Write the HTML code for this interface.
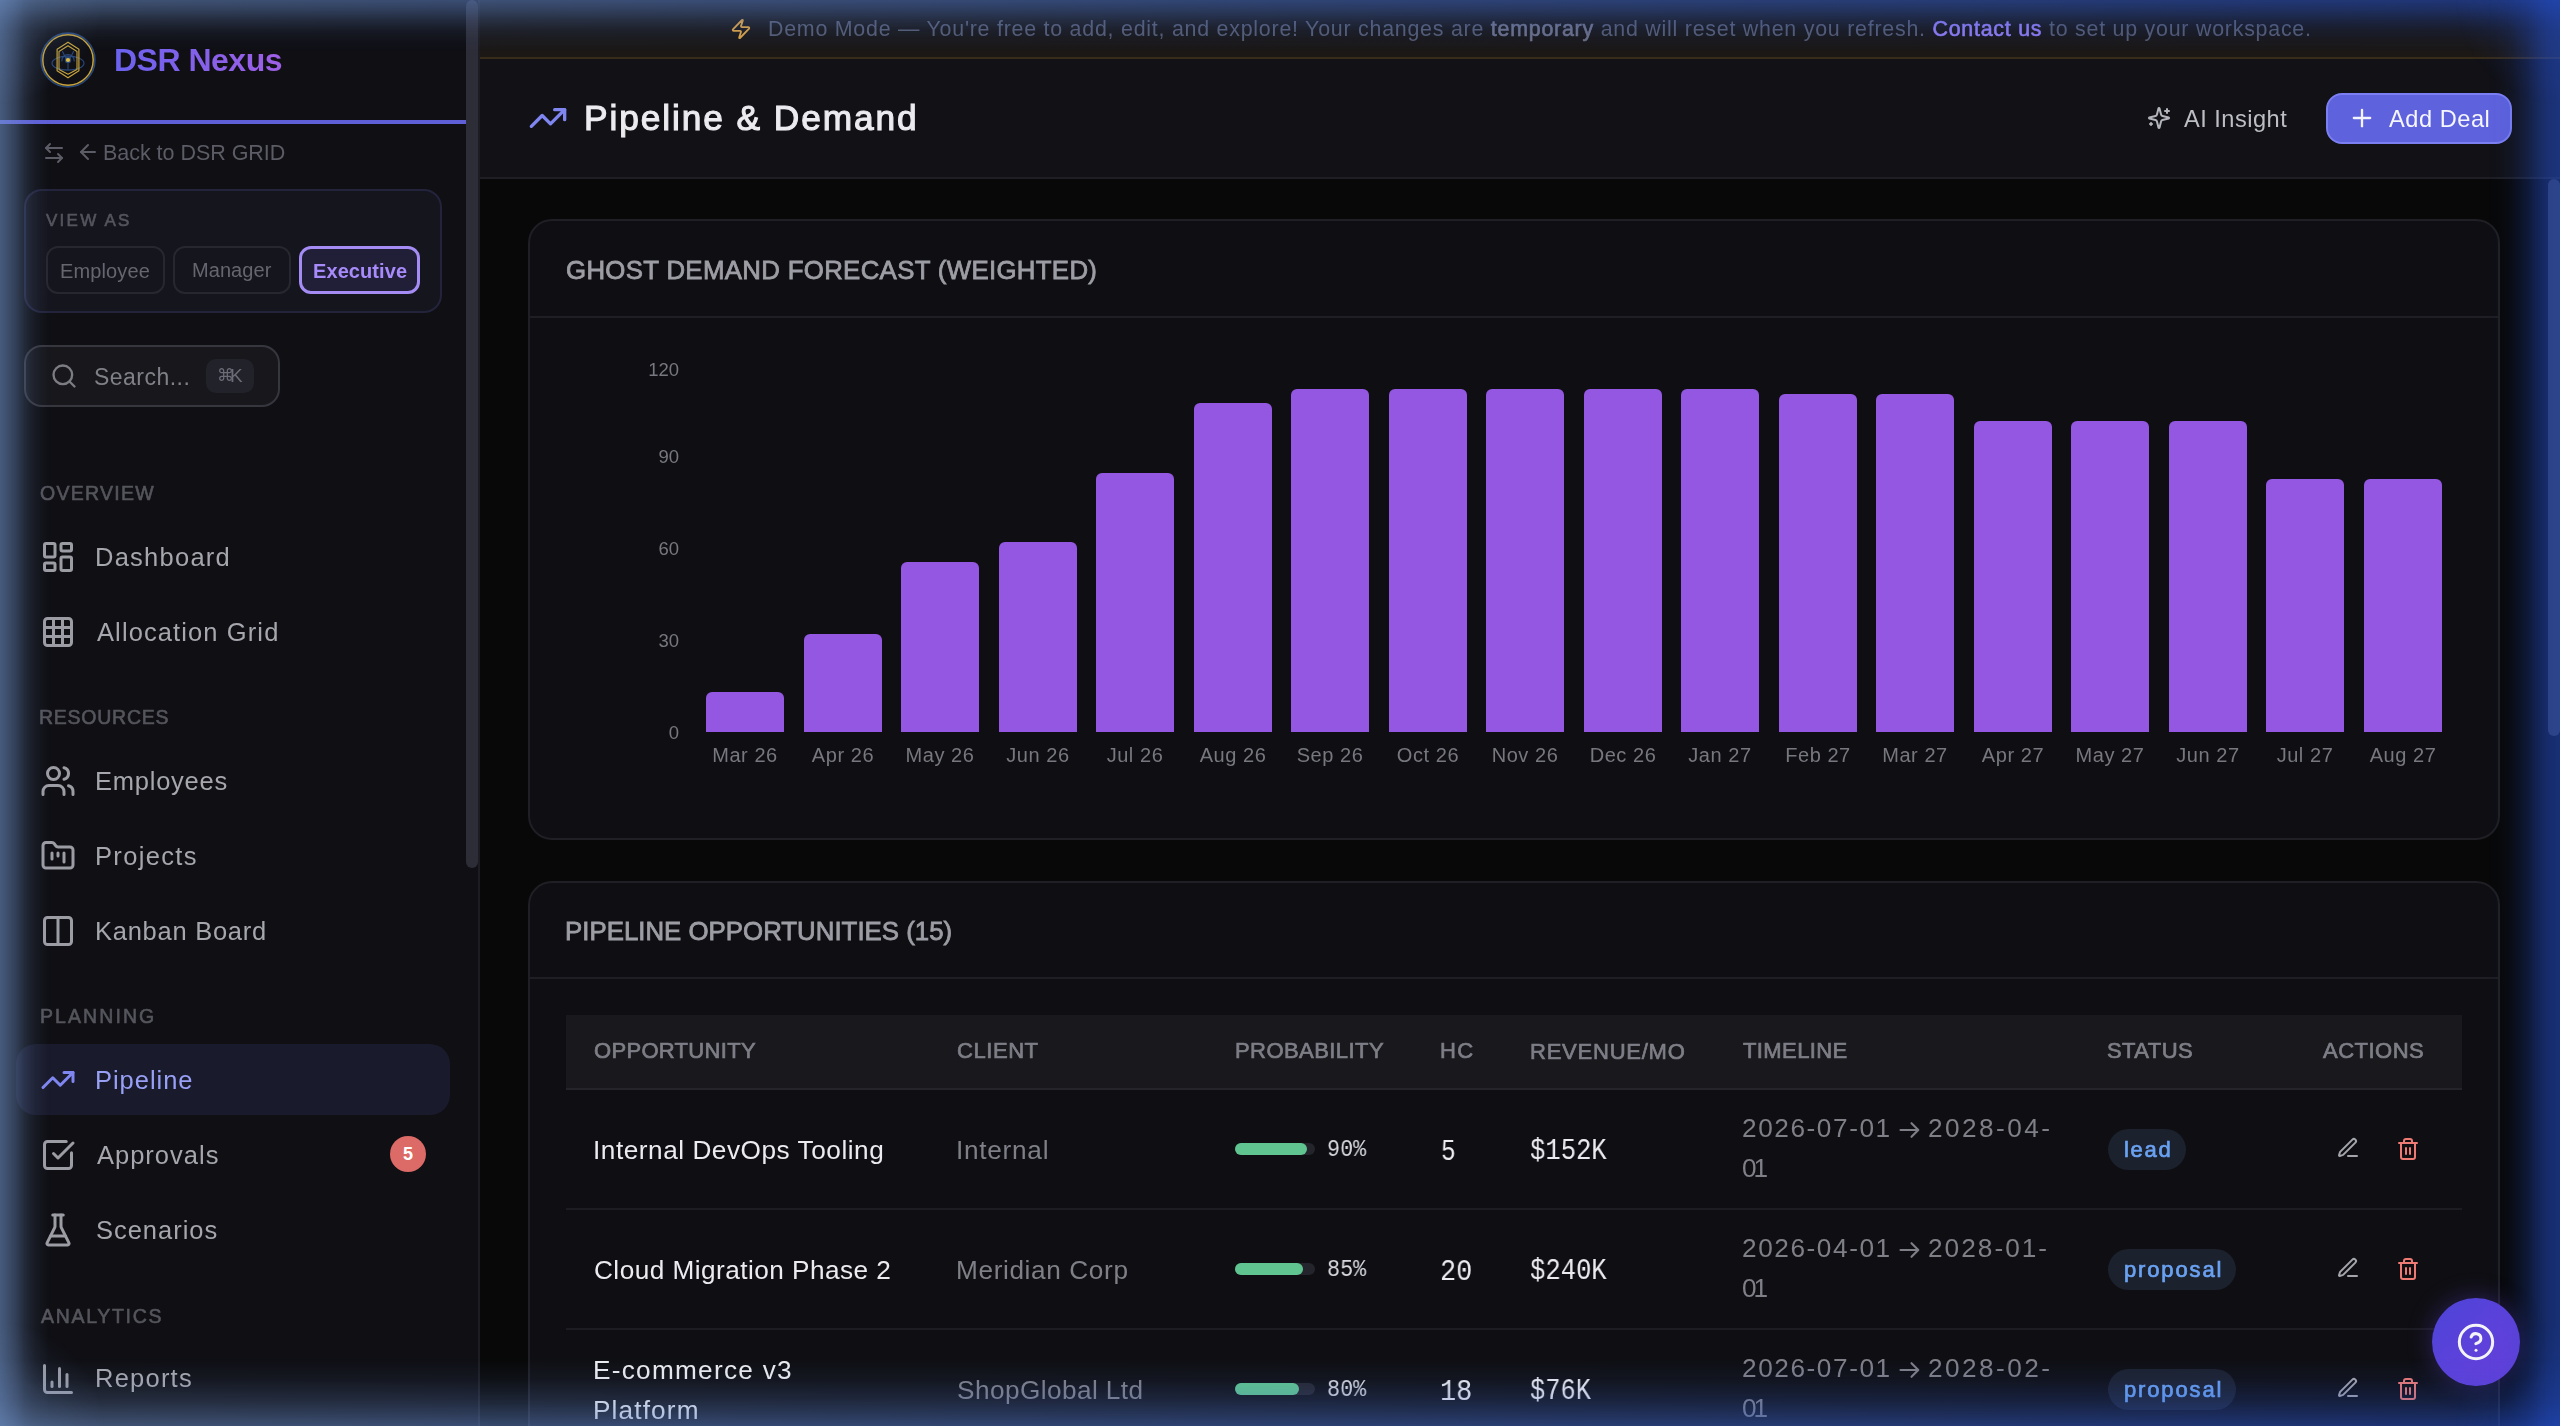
<!DOCTYPE html>
<html><head><meta charset="utf-8">
<style>
*{box-sizing:border-box;margin:0;padding:0}
html,body{width:2560px;height:1426px;overflow:hidden;background:#080808;font-family:"Liberation Sans",sans-serif}
.abs{position:absolute}
svg{display:block}
.t{position:absolute;white-space:nowrap;line-height:1;will-change:transform}
.ico{position:absolute;fill:none;stroke-linecap:round;stroke-linejoin:round}
.card{position:absolute;background:#0f0f13;border:2px solid #1f1f25;border-radius:24px}
.bar{position:absolute;width:78px;background:#9457e2;border-radius:6px 6px 0 0}
</style></head><body>

<div class="abs" style="left:0;top:0;width:478px;height:1426px;background:#0f0f14"></div>
<div class="abs" style="left:466px;top:0;width:12px;height:868px;background:#2d2d38;border-radius:6px"></div>
<div class="abs" style="left:478px;top:0;width:2px;height:1426px;background:#1c1c22"></div>
<svg class="ico" style="left:38px;top:30px" width="60" height="60" viewBox="0 0 60 60">
<circle cx="30" cy="30" r="26.9" stroke="#284779" stroke-width="1.6"/>
<circle cx="30" cy="30" r="25.2" stroke="#c8a43c" stroke-width="1.5"/>
<ellipse cx="30" cy="33.2" rx="16" ry="7" stroke="#284779" stroke-width="1.2"/>
<path d="M30 12.2 L40.9 19.2 V40.8 L30 47.8 L19.1 40.8 V19.2 Z" stroke="#c8a43c" stroke-width="1.2"/>
<path d="M30 15.8 L39 21.5 V39.6 L30 44.3 L21 39.6 V21.5 Z" stroke="#c8a43c" stroke-width="1.1"/>
<path d="M23.8 31 C23.5 22.5 36.5 22.5 36.2 31" stroke="#284779" stroke-width="1.1"/>
<path d="M24.5 21.5 L28 28.5 M35.5 21.5 L32 28.5 M30 33.5 V39.5" stroke="#284779" stroke-width="1.1"/>
<circle cx="30" cy="30" r="3.2" fill="#284779"/>
<circle cx="30" cy="30" r="2.1" fill="#e2bd3e"/>
</svg>
<div class="abs" style="left:0;top:120px;width:466px;height:4px;background:#5f5fd8"></div>
<svg class="ico" style="left:42px;top:141px" width="24" height="24" viewBox="0 0 24 24" stroke="#5c5c66" stroke-width="2"><path d="M8 3 4 7l4 4"/><path d="M4 7h16"/><path d="m16 21 4-4-4-4"/><path d="M20 17H4"/></svg>
<svg class="ico" style="left:76px;top:140px" width="24" height="24" viewBox="0 0 24 24" stroke="#5c5c66" stroke-width="2"><path d="m12 19-7-7 7-7"/><path d="M19 12H5"/></svg>
<div class="abs" style="left:24px;top:189px;width:418px;height:124px;border:2px solid #23233c;border-radius:18px;background:#15151e"></div>
<div class="abs" style="left:46px;top:246px;width:119px;height:48px;border:2px solid #27272f;border-radius:12px;background:transparent"></div>
<div class="abs" style="left:173px;top:246px;width:118px;height:48px;border:2px solid #27272f;border-radius:12px;background:transparent"></div>
<div class="abs" style="left:299px;top:246px;width:121px;height:48px;border:3px solid #a48cf4;border-radius:12px;background:#211e38"></div>
<div class="abs" style="left:24px;top:345px;width:256px;height:62px;border:2px solid #36363e;border-radius:18px;background:#17171c"></div>
<svg class="ico" style="left:50px;top:362px" width="28" height="28" viewBox="0 0 24 24" stroke="#7c7c84" stroke-width="2"><circle cx="11" cy="11" r="8"/><path d="m21 21-4.3-4.3"/></svg>
<div class="abs" style="left:206px;top:359px;width:48px;height:34px;border-radius:10px;background:#22222b"></div>
<div class="abs" style="left:16px;top:1044px;width:434px;height:71px;border-radius:20px;background:#191a2b"></div>
<svg class="ico" style="left:40px;top:539px" width="36" height="36" viewBox="0 0 24 24" stroke="#9c9ca4" stroke-width="2"><rect width="7" height="9" x="3" y="3" rx="1"/><rect width="7" height="5" x="14" y="3" rx="1"/><rect width="7" height="9" x="14" y="12" rx="1"/><rect width="7" height="5" x="3" y="16" rx="1"/></svg>
<svg class="ico" style="left:40px;top:614px" width="36" height="36" viewBox="0 0 24 24" stroke="#9c9ca4" stroke-width="2"><rect width="18" height="18" x="3" y="3" rx="2"/><path d="M3 9h18"/><path d="M3 15h18"/><path d="M9 3v18"/><path d="M15 3v18"/></svg>
<svg class="ico" style="left:40px;top:763px" width="36" height="36" viewBox="0 0 24 24" stroke="#9c9ca4" stroke-width="2"><path d="M16 21v-2a4 4 0 0 0-4-4H6a4 4 0 0 0-4 4v2"/><circle cx="9" cy="7" r="4"/><path d="M22 21v-2a4 4 0 0 0-3-3.87"/><path d="M16 3.13a4 4 0 0 1 0 7.75"/></svg>
<svg class="ico" style="left:40px;top:838px" width="36" height="36" viewBox="0 0 24 24" stroke="#9c9ca4" stroke-width="2"><path d="M4 20h16a2 2 0 0 0 2-2V8a2 2 0 0 0-2-2h-7.93a2 2 0 0 1-1.66-.9l-.82-1.2A2 2 0 0 0 7.93 3H4a2 2 0 0 0-2 2v13c0 1.1.9 2 2 2Z"/><path d="M8 10v4"/><path d="M12 10v2"/><path d="M16 10v6"/></svg>
<svg class="ico" style="left:40px;top:913px" width="36" height="36" viewBox="0 0 24 24" stroke="#9c9ca4" stroke-width="2"><rect width="18" height="18" x="3" y="3" rx="2"/><path d="M12 3v18"/></svg>
<svg class="ico" style="left:40px;top:1062px" width="36" height="36" viewBox="0 0 24 24" stroke="#7f86f0" stroke-width="2"><polyline points="22 7 13.5 15.5 8.5 10.5 2 17"/><polyline points="16 7 22 7 22 13"/></svg>
<svg class="ico" style="left:40px;top:1137px" width="36" height="36" viewBox="0 0 24 24" stroke="#9c9ca4" stroke-width="2"><path d="M21 10.5V19a2 2 0 0 1-2 2H5a2 2 0 0 1-2-2V5a2 2 0 0 1 2-2h12.5"/><path d="m9 11 3 3L22 4"/></svg>
<svg class="ico" style="left:40px;top:1212px" width="36" height="36" viewBox="0 0 24 24" stroke="#9c9ca4" stroke-width="2"><path d="M10 2v7.527a2 2 0 0 1-.211.896L4.72 20.55a1 1 0 0 0 .9 1.45h12.76a1 1 0 0 0 .9-1.45l-5.069-10.127A2 2 0 0 1 14 9.527V2"/><path d="M8.5 2h7"/><path d="M7 16h10"/></svg>
<svg class="ico" style="left:40px;top:1361px" width="36" height="36" viewBox="0 0 24 24" stroke="#9c9ca4" stroke-width="2"><path d="M3 3v16a2 2 0 0 0 2 2h16"/><path d="M18 17V9"/><path d="M13 17V5"/><path d="M8 17v-3"/></svg>
<div class="abs" style="left:390px;top:1136px;width:36px;height:36px;border-radius:18px;background:#dc6a66;color:#fff;font-size:18px;font-weight:bold;line-height:36px;text-align:center">5</div>
<div class="abs" style="left:480px;top:0;width:2080px;height:59px;background:linear-gradient(180deg,#161619 0,#18171a 60%,#1c1815 100%);border-bottom:2px solid #382b17"></div>
<svg class="ico" style="left:730px;top:18px" width="22" height="22" viewBox="0 0 24 24" stroke="#d9a044" stroke-width="2"><path d="M4 14a1 1 0 0 1-.78-1.63l9.9-10.2a.5.5 0 0 1 .86.46l-1.92 6.02A1 1 0 0 0 13 10h7a1 1 0 0 1 .78 1.63l-9.9 10.2a.5.5 0 0 1-.86-.46l1.92-6.02A1 1 0 0 0 11 14z"/></svg>
<div class="abs" style="left:480px;top:59px;width:2080px;height:120px;background:#111116;border-bottom:2px solid #1e1e24"></div>
<svg class="ico" style="left:528px;top:98px" width="40" height="40" viewBox="0 0 24 24" stroke="#7f86f0" stroke-width="2"><polyline points="22 7 13.5 15.5 8.5 10.5 2 17"/><polyline points="16 7 22 7 22 13"/></svg>
<svg class="ico" style="left:2147px;top:106px" width="24" height="24" viewBox="0 0 24 24" stroke="#b4b4bc" stroke-width="2"><path d="M9.937 15.5A2 2 0 0 0 8.5 14.063l-6.135-1.582a.5.5 0 0 1 0-.962L8.5 9.936A2 2 0 0 0 9.937 8.5l1.582-6.135a.5.5 0 0 1 .963 0L14.063 8.5A2 2 0 0 0 15.5 9.937l6.135 1.581a.5.5 0 0 1 0 .964L15.5 14.063a2 2 0 0 0-1.437 1.437l-1.582 6.135a.5.5 0 0 1-.963 0z"/><path d="M20 3v4"/><path d="M22 5h-4"/><path d="M4 17v2"/><path d="M5 18H3"/></svg>
<div class="abs" style="left:2326px;top:93px;width:186px;height:51px;border-radius:16px;background:#5e62dc;border:2px solid #7b7ff2"></div>
<svg class="ico" style="left:2348px;top:104px" width="28" height="28" viewBox="0 0 24 24" stroke="#f4f4ff" stroke-width="2"><path d="M5 12h14"/><path d="M12 5v14"/></svg>
<div class="card" style="left:528px;top:219px;width:1972px;height:621px"></div>
<div class="abs" style="left:530px;top:316px;width:1968px;height:2px;background:#1e1e24"></div>
<div class="bar" style="left:706.00px;top:692px;height:40.0px"></div>
<div class="bar" style="left:803.53px;top:634.2px;height:97.8px"></div>
<div class="bar" style="left:901.06px;top:562px;height:170.0px"></div>
<div class="bar" style="left:998.59px;top:542.2px;height:189.8px"></div>
<div class="bar" style="left:1096.12px;top:473.4px;height:258.6px"></div>
<div class="bar" style="left:1193.65px;top:402.8px;height:329.2px"></div>
<div class="bar" style="left:1291.18px;top:388.6px;height:343.4px"></div>
<div class="bar" style="left:1388.71px;top:388.6px;height:343.4px"></div>
<div class="bar" style="left:1486.24px;top:388.6px;height:343.4px"></div>
<div class="bar" style="left:1583.77px;top:388.6px;height:343.4px"></div>
<div class="bar" style="left:1681.30px;top:388.6px;height:343.4px"></div>
<div class="bar" style="left:1778.83px;top:394px;height:338.0px"></div>
<div class="bar" style="left:1876.36px;top:394px;height:338.0px"></div>
<div class="bar" style="left:1973.89px;top:421.4px;height:310.6px"></div>
<div class="bar" style="left:2071.42px;top:421.4px;height:310.6px"></div>
<div class="bar" style="left:2168.95px;top:421.4px;height:310.6px"></div>
<div class="bar" style="left:2266.48px;top:478.8px;height:253.2px"></div>
<div class="bar" style="left:2364.01px;top:478.8px;height:253.2px"></div>
<div class="card" style="left:528px;top:881px;width:1972px;height:700px"></div>
<div class="abs" style="left:530px;top:977px;width:1968px;height:2px;background:#1e1e24"></div>
<div class="abs" style="left:566px;top:1015px;width:1896px;height:75px;background:#18181d;border-bottom:2px solid #24242a"></div>
<div class="abs" style="left:1235px;top:1143px;width:80px;height:12px;border-radius:6px;background:#24242c"></div>
<div class="abs" style="left:1235px;top:1143px;width:72px;height:12px;border-radius:6px;background:#5fc48f"></div>
<div class="abs" style="left:2108px;top:1129px;width:78px;height:41px;border-radius:21px;background:#1c212e"></div>
<svg class="ico" style="left:1898.5px;top:1120.5px" width="21" height="18" viewBox="0 0 21 18" stroke="#7f7f88" stroke-width="2.1"><path d="M1.5 9H19M12.5 2.2 19.3 9 12.5 15.8"/></svg>
<svg class="ico" style="left:2336px;top:1136.4px" width="24" height="24" viewBox="0 0 24 24" stroke="#a4a4ac" stroke-width="2"><path d="M12 20h9"/><path d="M16.376 3.622a1 1 0 0 1 3.002 3.002L7.368 18.635a2 2 0 0 1-.855.506l-2.872.838a.5.5 0 0 1-.62-.62l.838-2.872a2 2 0 0 1 .506-.854z"/></svg>
<svg class="ico" style="left:2396px;top:1137px" width="24" height="24" viewBox="0 0 24 24" stroke="#ee7a74" stroke-width="2"><path d="M3 6h18"/><path d="M19 6v14c0 1-1 2-2 2H7c-1 0-2-1-2-2V6"/><path d="M8 6V4c0-1 1-2 2-2h4c1 0 2 1 2 2v2"/><line x1="10" x2="10" y1="11" y2="17"/><line x1="14" x2="14" y1="11" y2="17"/></svg>
<div class="abs" style="left:566px;top:1208px;width:1896px;height:2px;background:#1c1c22"></div>
<div class="abs" style="left:1235px;top:1263px;width:80px;height:12px;border-radius:6px;background:#24242c"></div>
<div class="abs" style="left:1235px;top:1263px;width:68px;height:12px;border-radius:6px;background:#5fc48f"></div>
<div class="abs" style="left:2108px;top:1249px;width:128px;height:41px;border-radius:21px;background:#1c212e"></div>
<svg class="ico" style="left:1898.5px;top:1240.5px" width="21" height="18" viewBox="0 0 21 18" stroke="#7f7f88" stroke-width="2.1"><path d="M1.5 9H19M12.5 2.2 19.3 9 12.5 15.8"/></svg>
<svg class="ico" style="left:2336px;top:1256.4px" width="24" height="24" viewBox="0 0 24 24" stroke="#a4a4ac" stroke-width="2"><path d="M12 20h9"/><path d="M16.376 3.622a1 1 0 0 1 3.002 3.002L7.368 18.635a2 2 0 0 1-.855.506l-2.872.838a.5.5 0 0 1-.62-.62l.838-2.872a2 2 0 0 1 .506-.854z"/></svg>
<svg class="ico" style="left:2396px;top:1257px" width="24" height="24" viewBox="0 0 24 24" stroke="#ee7a74" stroke-width="2"><path d="M3 6h18"/><path d="M19 6v14c0 1-1 2-2 2H7c-1 0-2-1-2-2V6"/><path d="M8 6V4c0-1 1-2 2-2h4c1 0 2 1 2 2v2"/><line x1="10" x2="10" y1="11" y2="17"/><line x1="14" x2="14" y1="11" y2="17"/></svg>
<div class="abs" style="left:566px;top:1328px;width:1896px;height:2px;background:#1c1c22"></div>
<div class="abs" style="left:1235px;top:1383px;width:80px;height:12px;border-radius:6px;background:#24242c"></div>
<div class="abs" style="left:1235px;top:1383px;width:64px;height:12px;border-radius:6px;background:#5fc48f"></div>
<div class="abs" style="left:2108px;top:1369px;width:128px;height:41px;border-radius:21px;background:#1c212e"></div>
<svg class="ico" style="left:1898.5px;top:1360.5px" width="21" height="18" viewBox="0 0 21 18" stroke="#7f7f88" stroke-width="2.1"><path d="M1.5 9H19M12.5 2.2 19.3 9 12.5 15.8"/></svg>
<svg class="ico" style="left:2336px;top:1376.4px" width="24" height="24" viewBox="0 0 24 24" stroke="#a4a4ac" stroke-width="2"><path d="M12 20h9"/><path d="M16.376 3.622a1 1 0 0 1 3.002 3.002L7.368 18.635a2 2 0 0 1-.855.506l-2.872.838a.5.5 0 0 1-.62-.62l.838-2.872a2 2 0 0 1 .506-.854z"/></svg>
<svg class="ico" style="left:2396px;top:1377px" width="24" height="24" viewBox="0 0 24 24" stroke="#ee7a74" stroke-width="2"><path d="M3 6h18"/><path d="M19 6v14c0 1-1 2-2 2H7c-1 0-2-1-2-2V6"/><path d="M8 6V4c0-1 1-2 2-2h4c1 0 2 1 2 2v2"/><line x1="10" x2="10" y1="11" y2="17"/><line x1="14" x2="14" y1="11" y2="17"/></svg>
<div class="abs" style="left:2432px;top:1298px;width:88px;height:88px;border-radius:44px;background:linear-gradient(135deg,#4c44d8,#6c3fdc);box-shadow:0 0 24px rgba(100,70,230,0.35)"></div>
<svg class="ico" style="left:2456px;top:1322px" width="40" height="40" viewBox="0 0 24 24" stroke="#f4f4f8" stroke-width="1.8"><circle cx="12" cy="12" r="10"/><path d="M9.09 9a3 3 0 0 1 5.83 1c0 2-3 3-3 3"/><path d="M12 17h.01"/></svg>
<div class="abs" style="left:2548px;top:179px;width:12px;height:557px;border-radius:6px;background:#36363e"></div>
<div class="t" id="logo" style="left:114.00px;top:43.82px;font-size:32px;letter-spacing:-0.500px;font-weight:bold;color:transparent;font-family:'Liberation Sans',sans-serif;background:linear-gradient(90deg,#6a62ee,#9f5fe6);-webkit-background-clip:text;color:transparent;">DSR Nexus</div>
<div class="t" id="back" style="left:103.00px;top:143.19px;font-size:21.5px;letter-spacing:-0.033px;font-weight:normal;color:#5c5c66;font-family:'Liberation Sans',sans-serif;">Back to DSR GRID</div>
<div class="t" id="viewas" style="left:46.00px;top:211.78px;font-size:17px;letter-spacing:2.250px;font-weight:normal;color:#55555e;font-family:'Liberation Sans',sans-serif;-webkit-text-stroke:0.6px #55555e;">VIEW AS</div>
<div class="t" id="search" style="left:94.00px;top:366.00px;font-size:23px;letter-spacing:0.475px;font-weight:normal;color:#808088;font-family:'Liberation Sans',sans-serif;">Search...</div>
<div class="t" id="kbd" style="left:216.60px;top:366.78px;font-size:17px;letter-spacing:-12.000px;font-weight:normal;color:#6c6c76;font-family:'Liberation Sans',sans-serif;">⌘</div>
<div class="t" id="kbd2" style="left:229.60px;top:365.50px;font-size:19px;letter-spacing:0.000px;font-weight:normal;color:#6c6c76;font-family:'Liberation Sans',sans-serif;">K</div>
<div class="t" id="btn_emp" style="left:60.00px;top:261.29px;font-size:20px;letter-spacing:0.136px;font-weight:normal;color:#66666e;font-family:'Liberation Sans',sans-serif;">Employee</div>
<div class="t" id="btn_mgr" style="left:192.00px;top:260.29px;font-size:20px;letter-spacing:0.067px;font-weight:normal;color:#66666e;font-family:'Liberation Sans',sans-serif;">Manager</div>
<div class="t" id="btn_exe" style="left:313.00px;top:261.29px;font-size:20px;letter-spacing:0.087px;font-weight:bold;color:#a78bfa;font-family:'Liberation Sans',sans-serif;">Executive</div>
<div class="t" id="sec_ov" style="left:40.00px;top:484.46px;font-size:19.5px;letter-spacing:1.257px;font-weight:normal;color:#55555d;font-family:'Liberation Sans',sans-serif;-webkit-text-stroke:0.6px #55555d;">OVERVIEW</div>
<div class="t" id="sec_res" style="left:39.00px;top:708.46px;font-size:19.5px;letter-spacing:0.750px;font-weight:normal;color:#55555d;font-family:'Liberation Sans',sans-serif;-webkit-text-stroke:0.6px #55555d;">RESOURCES</div>
<div class="t" id="sec_plan" style="left:40.00px;top:1007.46px;font-size:19.5px;letter-spacing:2.086px;font-weight:normal;color:#55555d;font-family:'Liberation Sans',sans-serif;-webkit-text-stroke:0.6px #55555d;">PLANNING</div>
<div class="t" id="sec_an" style="left:41.00px;top:1307.46px;font-size:19.5px;letter-spacing:1.700px;font-weight:normal;color:#55555d;font-family:'Liberation Sans',sans-serif;-webkit-text-stroke:0.6px #55555d;">ANALYTICS</div>
<div class="t" id="n_dash" style="left:95.00px;top:544.67px;font-size:25.5px;letter-spacing:1.250px;font-weight:normal;color:#a6a6ae;font-family:'Liberation Sans',sans-serif;">Dashboard</div>
<div class="t" id="n_grid" style="left:97.00px;top:619.67px;font-size:25.5px;letter-spacing:1.107px;font-weight:normal;color:#a6a6ae;font-family:'Liberation Sans',sans-serif;">Allocation Grid</div>
<div class="t" id="n_emp" style="left:95.00px;top:768.67px;font-size:25.5px;letter-spacing:0.762px;font-weight:normal;color:#a6a6ae;font-family:'Liberation Sans',sans-serif;">Employees</div>
<div class="t" id="n_proj" style="left:95.00px;top:843.67px;font-size:25.5px;letter-spacing:1.343px;font-weight:normal;color:#a6a6ae;font-family:'Liberation Sans',sans-serif;">Projects</div>
<div class="t" id="n_kan" style="left:95.00px;top:918.67px;font-size:25.5px;letter-spacing:0.736px;font-weight:normal;color:#a6a6ae;font-family:'Liberation Sans',sans-serif;">Kanban Board</div>
<div class="t" id="n_pipe" style="left:95.00px;top:1067.67px;font-size:25.5px;letter-spacing:0.971px;font-weight:normal;color:#98a0f6;font-family:'Liberation Sans',sans-serif;">Pipeline</div>
<div class="t" id="n_appr" style="left:97.00px;top:1142.67px;font-size:25.5px;letter-spacing:1.000px;font-weight:normal;color:#a6a6ae;font-family:'Liberation Sans',sans-serif;">Approvals</div>
<div class="t" id="n_scen" style="left:96.00px;top:1217.67px;font-size:25.5px;letter-spacing:0.975px;font-weight:normal;color:#a6a6ae;font-family:'Liberation Sans',sans-serif;">Scenarios</div>
<div class="t" id="n_rep" style="left:95.00px;top:1365.67px;font-size:25.5px;letter-spacing:1.233px;font-weight:normal;color:#a6a6ae;font-family:'Liberation Sans',sans-serif;">Reports</div>
<div class="t" id="banner" style="left:768.00px;top:19.21px;font-size:21.4px;letter-spacing:0.759px;font-weight:normal;color:#545b72;font-family:'Liberation Sans',sans-serif;">Demo Mode — You're free to add, edit, and explore! Your changes are <span style="color:#6b7088;-webkit-text-stroke:0.6px #6b7088">temporary</span> and will reset when you refresh. <span style="color:#8f7cf2;-webkit-text-stroke:0.6px #8f7cf2">Contact us</span> to set up your workspace.</div>
<div class="t" id="title" style="left:584.00px;top:100.39px;font-size:35.3px;letter-spacing:1.909px;font-weight:normal;color:#ececf0;font-family:'Liberation Sans',sans-serif;-webkit-text-stroke:1.1px #ececf0;">Pipeline &amp; Demand</div>
<div class="t" id="ai" style="left:2184.00px;top:107.92px;font-size:23.6px;letter-spacing:0.489px;font-weight:normal;color:#bdbdc5;font-family:'Liberation Sans',sans-serif;">AI Insight</div>
<div class="t" id="add" style="left:2389.00px;top:107.92px;font-size:23.6px;letter-spacing:0.543px;font-weight:normal;color:#f6f6ff;font-family:'Liberation Sans',sans-serif;">Add Deal</div>
<div class="t" id="ghost" style="left:566.00px;top:257.63px;font-size:25.8px;letter-spacing:0.329px;font-weight:normal;color:#9d9da5;font-family:'Liberation Sans',sans-serif;-webkit-text-stroke:0.8px #9d9da5;">GHOST DEMAND FORECAST (WEIGHTED)</div>
<div class="t" id="popp" style="left:565.00px;top:918.63px;font-size:25.8px;letter-spacing:0.023px;font-weight:normal;color:#9d9da5;font-family:'Liberation Sans',sans-serif;-webkit-text-stroke:0.8px #9d9da5;">PIPELINE OPPORTUNITIES (15)</div>
<div class="t" id="th1" style="left:594.00px;top:1040.13px;font-size:22px;letter-spacing:0.310px;font-weight:normal;color:#7e7e87;font-family:'Liberation Sans',sans-serif;-webkit-text-stroke:0.7px #7e7e87;">OPPORTUNITY</div>
<div class="t" id="th2" style="left:957.00px;top:1040.13px;font-size:22px;letter-spacing:0.560px;font-weight:normal;color:#7e7e87;font-family:'Liberation Sans',sans-serif;-webkit-text-stroke:0.7px #7e7e87;">CLIENT</div>
<div class="t" id="th3" style="left:1235.00px;top:1040.13px;font-size:22px;letter-spacing:0.430px;font-weight:normal;color:#7e7e87;font-family:'Liberation Sans',sans-serif;-webkit-text-stroke:0.7px #7e7e87;">PROBABILITY</div>
<div class="t" id="th4" style="left:1440.00px;top:1040.13px;font-size:22px;letter-spacing:1.400px;font-weight:normal;color:#7e7e87;font-family:'Liberation Sans',sans-serif;-webkit-text-stroke:0.7px #7e7e87;">HC</div>
<div class="t" id="th5" style="left:1530.00px;top:1041.13px;font-size:22px;letter-spacing:0.767px;font-weight:normal;color:#7e7e87;font-family:'Liberation Sans',sans-serif;-webkit-text-stroke:0.7px #7e7e87;">REVENUE/MO</div>
<div class="t" id="th6" style="left:1743.00px;top:1040.13px;font-size:22px;letter-spacing:0.400px;font-weight:normal;color:#7e7e87;font-family:'Liberation Sans',sans-serif;-webkit-text-stroke:0.7px #7e7e87;">TIMELINE</div>
<div class="t" id="th7" style="left:2107.00px;top:1040.13px;font-size:22px;letter-spacing:0.440px;font-weight:normal;color:#7e7e87;font-family:'Liberation Sans',sans-serif;-webkit-text-stroke:0.7px #7e7e87;">STATUS</div>
<div class="t" id="th8" style="left:2323.00px;top:1040.13px;font-size:22px;letter-spacing:0.483px;font-weight:normal;color:#7e7e87;font-family:'Liberation Sans',sans-serif;-webkit-text-stroke:0.7px #7e7e87;">ACTIONS</div>
<div class="t" id="r0n" style="left:593.00px;top:1136.58px;font-size:26.2px;letter-spacing:0.534px;font-weight:normal;color:#ececf0;font-family:'Liberation Sans',sans-serif;">Internal DevOps Tooling</div>
<div class="t" id="r0c" style="left:956.00px;top:1136.58px;font-size:26.2px;letter-spacing:0.729px;font-weight:normal;color:#7f7f88;font-family:'Liberation Sans',sans-serif;">Internal</div>
<div class="t" id="r0p" style="left:1327.00px;top:1138.48px;font-size:23.6px;letter-spacing:0.000px;font-weight:normal;color:#d8d8e0;font-family:'Liberation Mono',monospace;transform:scaleX(0.9216);transform-origin:0 0;letter-spacing:0px;">90%</div>
<div class="t" id="r0h" style="left:1441.40px;top:1138.84px;font-size:28.7px;letter-spacing:0.000px;font-weight:normal;color:#ececf0;font-family:'Liberation Mono',monospace;transform:scaleX(0.8500);transform-origin:0 0;letter-spacing:0px;">5</div>
<div class="t" id="r0r" style="left:1530.20px;top:1138.04px;font-size:28.7px;letter-spacing:0.000px;font-weight:normal;color:#ececf0;font-family:'Liberation Mono',monospace;transform:scaleX(0.8907);transform-origin:0 0;letter-spacing:0px;">$152K</div>
<div class="t" id="r0t1" style="left:1742.00px;top:1114.58px;font-size:26.2px;letter-spacing:1.577px;font-weight:normal;color:#7f7f88;font-family:'Liberation Sans',sans-serif;">2026-07-01</div>
<div class="t" id="r0t1b" style="left:1928.00px;top:1114.78px;font-size:26.2px;letter-spacing:2.464px;font-weight:normal;color:#7f7f88;font-family:'Liberation Sans',sans-serif;">2028-04-</div>
<div class="t" id="r0t2" style="left:1742.00px;top:1154.58px;font-size:26.2px;letter-spacing:-3.000px;font-weight:normal;color:#7f7f88;font-family:'Liberation Sans',sans-serif;">01</div>
<div class="t" id="r0s" style="left:2124.00px;top:1139.13px;font-size:22px;letter-spacing:1.700px;font-weight:normal;color:#6aa2f2;font-family:'Liberation Sans',sans-serif;-webkit-text-stroke:0.7px #6aa2f2;">lead</div>
<div class="t" id="r1n" style="left:594.00px;top:1256.58px;font-size:26.2px;letter-spacing:0.457px;font-weight:normal;color:#ececf0;font-family:'Liberation Sans',sans-serif;">Cloud Migration Phase 2</div>
<div class="t" id="r1c" style="left:956.00px;top:1256.58px;font-size:26.2px;letter-spacing:0.625px;font-weight:normal;color:#7f7f88;font-family:'Liberation Sans',sans-serif;">Meridian Corp</div>
<div class="t" id="r1p" style="left:1327.00px;top:1258.48px;font-size:23.6px;letter-spacing:0.000px;font-weight:normal;color:#d8d8e0;font-family:'Liberation Mono',monospace;transform:scaleX(0.9216);transform-origin:0 0;letter-spacing:0px;">85%</div>
<div class="t" id="r1h" style="left:1439.80px;top:1258.84px;font-size:28.7px;letter-spacing:0.000px;font-weight:normal;color:#ececf0;font-family:'Liberation Mono',monospace;transform:scaleX(0.9355);transform-origin:0 0;letter-spacing:0px;">20</div>
<div class="t" id="r1r" style="left:1530.20px;top:1258.04px;font-size:28.7px;letter-spacing:0.000px;font-weight:normal;color:#ececf0;font-family:'Liberation Mono',monospace;transform:scaleX(0.8907);transform-origin:0 0;letter-spacing:0px;">$240K</div>
<div class="t" id="r1t1" style="left:1742.00px;top:1234.58px;font-size:26.2px;letter-spacing:1.577px;font-weight:normal;color:#7f7f88;font-family:'Liberation Sans',sans-serif;">2026-04-01</div>
<div class="t" id="r1t1b" style="left:1928.00px;top:1234.78px;font-size:26.2px;letter-spacing:2.036px;font-weight:normal;color:#7f7f88;font-family:'Liberation Sans',sans-serif;">2028-01-</div>
<div class="t" id="r1t2" style="left:1742.00px;top:1274.58px;font-size:26.2px;letter-spacing:-3.000px;font-weight:normal;color:#7f7f88;font-family:'Liberation Sans',sans-serif;">01</div>
<div class="t" id="r1s" style="left:2124.00px;top:1259.13px;font-size:22px;letter-spacing:1.857px;font-weight:normal;color:#6aa2f2;font-family:'Liberation Sans',sans-serif;-webkit-text-stroke:0.7px #6aa2f2;">proposal</div>
<div class="t" id="r2n" style="left:593.00px;top:1356.58px;font-size:26.2px;letter-spacing:1.271px;font-weight:normal;color:#ececf0;font-family:'Liberation Sans',sans-serif;">E-commerce v3</div>
<div class="t" id="r2n2" style="left:593.00px;top:1396.58px;font-size:26.2px;letter-spacing:1.136px;font-weight:normal;color:#ececf0;font-family:'Liberation Sans',sans-serif;">Platform</div>
<div class="t" id="r2c" style="left:957.00px;top:1376.58px;font-size:26.2px;letter-spacing:0.431px;font-weight:normal;color:#7f7f88;font-family:'Liberation Sans',sans-serif;">ShopGlobal Ltd</div>
<div class="t" id="r2p" style="left:1327.00px;top:1378.48px;font-size:23.6px;letter-spacing:0.000px;font-weight:normal;color:#d8d8e0;font-family:'Liberation Mono',monospace;transform:scaleX(0.9216);transform-origin:0 0;letter-spacing:0px;">80%</div>
<div class="t" id="r2h" style="left:1439.80px;top:1378.84px;font-size:28.7px;letter-spacing:0.000px;font-weight:normal;color:#ececf0;font-family:'Liberation Mono',monospace;transform:scaleX(0.9355);transform-origin:0 0;letter-spacing:0px;">18</div>
<div class="t" id="r2r" style="left:1530.20px;top:1378.04px;font-size:28.7px;letter-spacing:0.000px;font-weight:normal;color:#ececf0;font-family:'Liberation Mono',monospace;transform:scaleX(0.8840);transform-origin:0 0;letter-spacing:0px;">$76K</div>
<div class="t" id="r2t1" style="left:1742.00px;top:1354.58px;font-size:26.2px;letter-spacing:1.577px;font-weight:normal;color:#7f7f88;font-family:'Liberation Sans',sans-serif;">2026-07-01</div>
<div class="t" id="r2t1b" style="left:1928.00px;top:1354.78px;font-size:26.2px;letter-spacing:2.464px;font-weight:normal;color:#7f7f88;font-family:'Liberation Sans',sans-serif;">2028-02-</div>
<div class="t" id="r2t2" style="left:1742.00px;top:1394.58px;font-size:26.2px;letter-spacing:-3.000px;font-weight:normal;color:#7f7f88;font-family:'Liberation Sans',sans-serif;">01</div>
<div class="t" id="r2s" style="left:2124.00px;top:1379.13px;font-size:22px;letter-spacing:1.857px;font-weight:normal;color:#6aa2f2;font-family:'Liberation Sans',sans-serif;-webkit-text-stroke:0.7px #6aa2f2;">proposal</div>
<div class="t" id="y120" style="left:579.00px;width:100px;text-align:right;top:360.59px;font-size:18.5px;letter-spacing:0.000px;color:#77777f;">120</div>
<div class="t" id="y90" style="left:579.00px;width:100px;text-align:right;top:447.59px;font-size:18.5px;letter-spacing:0.000px;color:#77777f;">90</div>
<div class="t" id="y60" style="left:579.00px;width:100px;text-align:right;top:539.59px;font-size:18.5px;letter-spacing:0.000px;color:#77777f;">60</div>
<div class="t" id="y30" style="left:579.00px;width:100px;text-align:right;top:631.59px;font-size:18.5px;letter-spacing:0.000px;color:#77777f;">30</div>
<div class="t" id="y0" style="left:579.00px;width:100px;text-align:right;top:723.59px;font-size:18.5px;letter-spacing:0.000px;color:#77777f;">0</div>
<div class="t" id="x0" style="left:645.00px;width:200px;text-align:center;top:744.69px;font-size:20px;letter-spacing:0.560px;color:#77777f;/*cx=745.0*/">Mar 26</div>
<div class="t" id="x1" style="left:742.53px;width:200px;text-align:center;top:744.69px;font-size:20px;letter-spacing:0.560px;color:#77777f;/*cx=842.53*/">Apr 26</div>
<div class="t" id="x2" style="left:840.06px;width:200px;text-align:center;top:744.69px;font-size:20px;letter-spacing:0.560px;color:#77777f;/*cx=940.06*/">May 26</div>
<div class="t" id="x3" style="left:937.59px;width:200px;text-align:center;top:744.69px;font-size:20px;letter-spacing:0.560px;color:#77777f;/*cx=1037.5900000000001*/">Jun 26</div>
<div class="t" id="x4" style="left:1035.12px;width:200px;text-align:center;top:744.69px;font-size:20px;letter-spacing:0.560px;color:#77777f;/*cx=1135.12*/">Jul 26</div>
<div class="t" id="x5" style="left:1132.65px;width:200px;text-align:center;top:744.69px;font-size:20px;letter-spacing:0.560px;color:#77777f;/*cx=1232.65*/">Aug 26</div>
<div class="t" id="x6" style="left:1230.18px;width:200px;text-align:center;top:744.69px;font-size:20px;letter-spacing:0.560px;color:#77777f;/*cx=1330.18*/">Sep 26</div>
<div class="t" id="x7" style="left:1327.71px;width:200px;text-align:center;top:744.69px;font-size:20px;letter-spacing:0.560px;color:#77777f;/*cx=1427.71*/">Oct 26</div>
<div class="t" id="x8" style="left:1425.24px;width:200px;text-align:center;top:744.69px;font-size:20px;letter-spacing:0.560px;color:#77777f;/*cx=1525.24*/">Nov 26</div>
<div class="t" id="x9" style="left:1522.77px;width:200px;text-align:center;top:744.69px;font-size:20px;letter-spacing:0.560px;color:#77777f;/*cx=1622.77*/">Dec 26</div>
<div class="t" id="x10" style="left:1620.30px;width:200px;text-align:center;top:744.69px;font-size:20px;letter-spacing:0.560px;color:#77777f;/*cx=1720.3*/">Jan 27</div>
<div class="t" id="x11" style="left:1717.83px;width:200px;text-align:center;top:744.69px;font-size:20px;letter-spacing:0.560px;color:#77777f;/*cx=1817.83*/">Feb 27</div>
<div class="t" id="x12" style="left:1815.36px;width:200px;text-align:center;top:744.69px;font-size:20px;letter-spacing:0.560px;color:#77777f;/*cx=1915.3600000000001*/">Mar 27</div>
<div class="t" id="x13" style="left:1912.89px;width:200px;text-align:center;top:744.69px;font-size:20px;letter-spacing:0.560px;color:#77777f;/*cx=2012.89*/">Apr 27</div>
<div class="t" id="x14" style="left:2010.42px;width:200px;text-align:center;top:744.69px;font-size:20px;letter-spacing:0.560px;color:#77777f;/*cx=2110.42*/">May 27</div>
<div class="t" id="x15" style="left:2107.95px;width:200px;text-align:center;top:744.69px;font-size:20px;letter-spacing:0.560px;color:#77777f;/*cx=2207.95*/">Jun 27</div>
<div class="t" id="x16" style="left:2205.48px;width:200px;text-align:center;top:744.69px;font-size:20px;letter-spacing:0.560px;color:#77777f;/*cx=2305.48*/">Jul 27</div>
<div class="t" id="x17" style="left:2303.01px;width:200px;text-align:center;top:744.69px;font-size:20px;letter-spacing:0.560px;color:#77777f;/*cx=2403.01*/">Aug 27</div>
<div class="abs" style="left:0;top:0;width:2560px;height:60px;background:linear-gradient(90deg,rgb(112,147,202),rgb(72,112,202) 50%,rgb(37,80,205));-webkit-mask-image:linear-gradient(180deg,rgba(0,0,0,.52) 0,rgba(0,0,0,.39) 10px,rgba(0,0,0,.23) 20px,rgba(0,0,0,.1) 30px,rgba(0,0,0,.035) 40px,transparent 52px)"></div>
<div class="abs" style="left:0;top:1356px;width:2560px;height:70px;background:linear-gradient(90deg,rgb(112,147,202),rgb(72,112,202) 50%,rgb(37,80,205));-webkit-mask-image:linear-gradient(0deg,rgba(0,0,0,.52) 0,rgba(0,0,0,.4) 10px,rgba(0,0,0,.23) 26px,rgba(0,0,0,.08) 46px,transparent 68px)"></div>
<div class="abs" style="left:0;top:0;width:56px;height:1426px;background:rgb(112,147,202);-webkit-mask-image:linear-gradient(90deg,rgba(0,0,0,.58) 0,rgba(0,0,0,.48) 8px,rgba(0,0,0,.35) 17px,rgba(0,0,0,.2) 25px,rgba(0,0,0,.11) 33px,rgba(0,0,0,.055) 40px,transparent 50px)"></div>
<div class="abs" style="left:0;top:0;width:140px;height:140px;background:radial-gradient(circle at 0 0,rgba(112,147,202,.06) 0,rgba(112,147,202,.12) 50px,transparent 105px)"></div>
<div class="abs" style="left:0;top:1286px;width:140px;height:140px;background:radial-gradient(circle at 0 100%,rgba(112,147,202,.06) 0,rgba(112,147,202,.12) 50px,transparent 105px)"></div>
<div class="abs" style="left:2420px;top:0;width:140px;height:140px;background:radial-gradient(circle at 100% 0,rgba(37,80,205,.06) 0,rgba(37,80,205,.12) 50px,transparent 105px)"></div>
<div class="abs" style="left:2420px;top:1286px;width:140px;height:140px;background:radial-gradient(circle at 100% 100%,rgba(37,80,205,.06) 0,rgba(37,80,205,.12) 50px,transparent 105px)"></div>
<div class="abs" style="left:2486px;top:0;width:74px;height:1426px;background:rgb(37,80,205);-webkit-mask-image:linear-gradient(270deg,rgba(0,0,0,.56) 0,rgba(0,0,0,.5) 12px,rgba(0,0,0,.42) 20px,rgba(0,0,0,.22) 34px,rgba(0,0,0,.08) 48px,rgba(0,0,0,.025) 59px,transparent 72px)"></div>
</body></html>
